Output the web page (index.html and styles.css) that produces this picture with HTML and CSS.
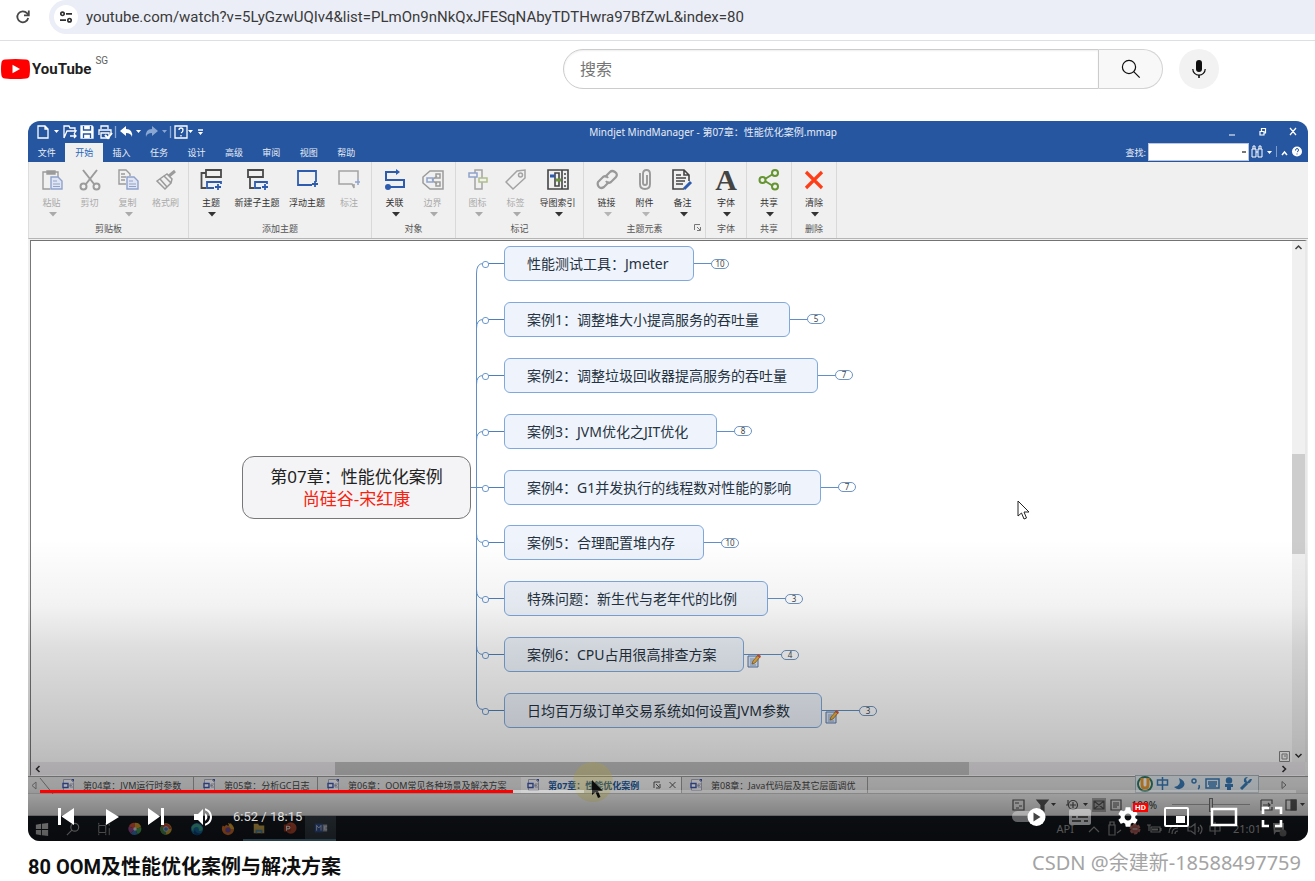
FILE: index.html
```html
<!DOCTYPE html>
<html lang="zh-CN">
<head>
<meta charset="utf-8">
<title>80 OOM及性能优化案例与解决方案 - YouTube</title>
<link rel="stylesheet" href="styles.css">
</head>
<body>
<svg class="defs" width="0" height="0" aria-hidden="true">
  <symbol id="doc" viewBox="0 0 13 12"><path d="M1.500 .5h7l3 3v8h-10z" fill="#f4f4fa" stroke="#a3a6b8"/><path d="M9 0h3v3z" fill="#3f57ab"/><path d="M1 4.500h5v4H1z" fill="#fff" stroke="#3c55ad" stroke-width="1.400"/><path d="M6 6.500h1.500M11 5H8v3h3M8 6.500h2" fill="none" stroke="#8d92a6" stroke-width=".8"/></symbol>
  <symbol id="note" viewBox="0 0 14 14"><path d="M1 2h10v11H1z" fill="#dbe7f7" stroke="#5b78a8"/><path d="M3 5h4M3 7h3M3 9h3M3 11h6" stroke="#8ba0c2"/><path d="M5 10l1-3 5-6 2 2-5 6z" fill="#eeb13c" stroke="#7d5a22" stroke-width=".7"/><path d="M11 0l3 2-1 2-3-2z" fill="#d4523d"/></symbol>
  <symbol id="down" viewBox="0 0 8 5"><path d="M0 0h8L4 4.500z" fill="currentColor"/></symbol>
</svg>

<header class="browser">
  <button class="reload" aria-label="重新加载"><svg width="16" height="16" viewBox="0 0 16 16" fill="none" stroke="#474747" stroke-width="1.800"><path d="M13.200 9A5.500 5.500 0 1 1 12 4.200l1.500 1.600"/><path d="M13.800 1.500v4.800H9"/></svg></button>
  <div class="omnibox">
    <button class="site" aria-label="网站信息"><svg width="14" height="12" viewBox="0 0 14 12" fill="none" stroke="#303030" stroke-width="1.700"><circle cx="3.500" cy="2.800" r="1.700"/><path d="M7 2.800h6M1 9.200h6"/><circle cx="10.500" cy="9.200" r="1.700"/></svg></button>
    <input class="url" type="text" aria-label="地址" value="youtube.com/watch?v=5LyGzwUQIv4&amp;list=PLmOn9nNkQxJFESqNAbyTDTHwra97BfZwL&amp;index=80">
  </div>
</header>

<div class="masthead">
  <a class="logo" href="#" aria-label="YouTube SG">
    <svg width="29" height="20" viewBox="0 0 29 20"><path d="M4 .5Q14.500-.5 25 .5q3.300.3 3.600 3.500.8 6 0 12-.3 3.200-3.600 3.500-10.500 1-21 0Q.7 19.200.4 16-.4 10 .4 4 .7.800 4 .5z" fill="red"/><path d="M11.500 5.800v8.400l7.500-4.200z" fill="#fff"/></svg>
    <span class="wordmark">YouTube</span><span class="country">SG</span>
  </a>
  <form class="search">
    <input type="text" placeholder="搜索" aria-label="搜索">
    <button type="button" class="go" aria-label="执行搜索"><svg width="20" height="20" viewBox="0 0 20 20" fill="none" stroke="#0f0f0f" stroke-width="1.200"><circle cx="8" cy="8" r="6.600"/><path d="M12.700 12.700l6 6"/></svg></button>
    <button type="button" class="mic" aria-label="语音搜索"><svg width="24" height="24" viewBox="0 0 24 24"><path d="M12 3a3 3 0 0 1 3 3v6a3 3 0 0 1-6 0V6a3 3 0 0 1 3-3z" fill="#0f0f0f"/><path d="M5.800 12a6.200 6.200 0 0 0 12.400 0" fill="none" stroke="#0f0f0f" stroke-width="1.200"/><path d="M11.200 18h1.600v3h-1.600z" fill="#0f0f0f"/></svg></button>
  </form>
</div>

<main>
<section class="player" aria-label="视频播放器">
  <div class="title-row">
    <div class="quick">
      <svg width="168" height="18" viewBox="0 0 168 18" fill="none" stroke="#fff" stroke-width="1.300"><path d="M2 3h7l3 3v9H2zM9 3v3h3"/><path d="M18 7h5l-2.500 3z" fill="#fff" stroke="none"/><path d="M28 15V3h5l1 2h5v3M28 15l3-7h9l-2 3M34 13h6m-2-2l2 2-2 2"/><path d="M45 3h11l1 1v11H45z" fill="#fff"/><path d="M47.500 3v4h7V3M47.500 15v-4h7v4" stroke="#26569f"/><path d="M65 6V3h7v3M63 12V7h12v5M65 10h8v5h-8zM66 7h5" /><path d="M69 12l3 3 4-5" stroke-width="2"/><path d="M79.500 3v12" stroke="#8ca9d3"/><path d="M84 8l6-5v3q7 0 6 8-1-4-6-4v3z" fill="#fff" stroke="none"/><path d="M100 7h5l-2.500 3z" fill="#fff" stroke="none"/><g fill="#89a7d2" stroke="none"><path d="M122 8l-6-5v3q-7 0-6 8 1-4 6-4v3z"/><path d="M126 7h5l-2.500 3z"/></g><path d="M134.500 3v12" stroke="#8ca9d3"/><path d="M139 3h12v12h-12zM143 7q0-2 2-2t2 2-2 3m0 2v1.500"/><path d="M152 7h5l-2.500 3zM162 9h5l-2.500 3z" fill="#fff" stroke="none"/><path d="M162 7h5"/></svg>
    </div>
    <div class="app-title">Mindjet MindManager - 第07章：性能优化案例.mmap</div>
    <div class="win">
      <svg width="70" height="12" viewBox="0 0 70 12" fill="none" stroke="#fff" stroke-width="1.200"><path d="M1 9h6M32 5.500h4V9h-4zM33.500 5V2.500h4V7H36M62 2l6 7M68 2l-6 7"/></svg>
    </div>
  </div>
  <nav class="menu">
    <div class="tabs"><button>文件</button><button class="on">开始</button><button>插入</button><button>任务</button><button>设计</button><button>高级</button><button>审阅</button><button>视图</button><button>帮助</button></div>
    <div class="find"><label for="find">查找:</label><select id="find"><option></option></select>
      <svg width="52" height="14" viewBox="0 0 52 14" fill="none" stroke="#fff"><path d="M1 12V4h4v8zM7 12V4h4v8zM5 7h2M2 4V1h2v3M8 4V1h2v3"/><path d="M16 6h5l-2.500 3z" fill="#fff" stroke="none"/><path d="M25.500 1v11" stroke="#7f9ccb"/><path d="M31 10l2.500-3 2.500 3" stroke-width="1.500"/><circle cx="46" cy="6.500" r="5" fill="#fff" stroke="none"/><path d="M44.500 5.500q0-2 1.500-2t1.500 1.500T46 7M46 8.500v1" stroke="#26569f"/></svg>
    </div>
  </nav>

  <div class="ribbon">
    <div class="group g1">
      <div class="tools">
        <button class="off"><svg viewBox="0 0 22 22" fill="none" stroke="#9b9b9b" stroke-width="1.400"><path d="M6 3H2v17h7M17 8V3h-3"/><path d="M6 2h8v3H6z" fill="#9b9b9b"/><path d="M10 8h7l4 4v8H10z" stroke="#8fa2cb" fill="#dfe5f3"/><path d="M12 12h4m-4 3h7m-7 2.500h7" stroke="#8fa2cb" stroke-width="1"/></svg>粘贴<i><svg><use href="#down"/></svg></i></button>
        <button class="off"><svg viewBox="0 0 22 22" fill="none" stroke="#9b9b9b" stroke-width="2"><path d="M4 1l11 14M18 1L7 15"/><circle cx="4.500" cy="17.500" r="3"/><circle cx="17.500" cy="17.500" r="3"/></svg>剪切<i></i></button>
        <button class="off"><svg viewBox="0 0 22 22" fill="none" stroke="#9b9b9b" stroke-width="1.400"><path d="M9 15H2V1h7l4 4v2M4 5h4M4 8h5M4 11h4"/><path d="M10 8h7l4 4v8H10z" stroke="#8fa2cb" fill="#dfe5f3"/><path d="M12 12h4m-4 3h7m-7 2.500h7" stroke="#8fa2cb" stroke-width="1"/></svg>复制<i><svg><use href="#down"/></svg></i></button>
        <button class="off"><svg viewBox="0 0 22 22" fill="none" stroke="#9b9b9b" stroke-width="1.500"><path d="M2 12l7-5 7 7-6 6zM9 7l3-2 5 5-1 4M5 10l7 8"/><path d="M14 7l6-5" stroke-width="3"/></svg>格式刷<i></i></button>
      </div><span class="cap">剪贴板</span>
    </div>
    <div class="group g2">
      <div class="tools">
        <button><svg viewBox="0 0 22 22" fill="none" stroke="#4a4a4a" stroke-width="1.800"><path d="M6 1h15v7H6zM6 4H1.500v15H6"/><path d="M14 19H7v-6h14v2M18 15v6m-3-3h6" stroke="#2d5cae"/></svg>主题<i><svg><use href="#down"/></svg></i></button>
        <button class="w54"><svg viewBox="0 0 22 22" fill="none" stroke="#4a4a4a" stroke-width="1.800"><path d="M2 1h15v7H2zM4 8v11h4"/><path d="M15 19H9v-6h12v2M19 15v6m-3-3h6" stroke="#2d5cae"/></svg>新建子主题<i></i></button>
        <button class="w46"><svg viewBox="0 0 22 22" fill="none" stroke="#2d5cae" stroke-width="1.800"><path d="M16 16H2V2h18v11M19 12v6m-3-3h6"/></svg>浮动主题<i></i></button>
        <button class="off"><svg viewBox="0 0 22 22" fill="none" stroke="#a3a3a3" stroke-width="1.500"><path d="M20 10V2H1v13h13l2 4v-4"/><path d="M20 10v6m-3-3h5" stroke="#8fa2cb"/></svg>标注<i></i></button>
      </div><span class="cap">添加主题</span>
    </div>
    <div class="group g3">
      <div class="tools">
        <button><svg viewBox="0 0 22 22" fill="none" stroke="#2d5cae" stroke-width="2"><path d="M14 3H2v8h18v7H5"/><path d="M12 0l4 3-4 3z" fill="#2d5cae" stroke="none"/><circle cx="4" cy="18" r="2" fill="#2d5cae"/></svg>关联<i><svg><use href="#down"/></svg></i></button>
        <button class="off"><svg viewBox="0 0 22 22" fill="none" stroke="#9b9b9b" stroke-width="1.500"><path d="M8 2h13v18H8l-7-6V8zM10 11l5-4m-5 4l5 4M14 5h4v4h-4zM14 13h4v4h-4z"/><path d="M5 9h6v4H5z" stroke="#8fa2cb"/></svg>边界<i><svg><use href="#down"/></svg></i></button>
      </div><span class="cap">对象</span>
    </div>
    <div class="group g4">
      <div class="tools">
        <button class="off"><svg viewBox="0 0 22 22" fill="#f0f0f0" stroke="#a3a3a3" stroke-width="1.500"><path d="M8 1h7v19H8z"/><path d="M2 4h8v4H2z" stroke="#8fa2cb"/><path d="M12 9h8v4h-8z" stroke="#aebf8a"/></svg>图标<i><svg><use href="#down"/></svg></i></button>
        <button class="off"><svg viewBox="0 0 22 22" fill="none" stroke="#a3a3a3" stroke-width="1.500"><path d="M1 13L12 2l8-1v8L8 20z"/><circle cx="15.500" cy="6" r="2"/></svg>标签<i><svg><use href="#down"/></svg></i></button>
        <button class="w46"><svg viewBox="0 0 22 22" fill="none" stroke="#444" stroke-width="1.600"><path d="M1 1h20v19H1zM15 1v19M8 4h4v13H8z"/><path d="M17 5h2m-2 4h2m-2 4h2m-2 4h2"/><path d="M3 7h5" stroke="#2d5cae" stroke-width="3"/><path d="M9 11h5" stroke="#69933d" stroke-width="3"/></svg>导图索引<i><svg><use href="#down"/></svg></i></button>
      </div><span class="cap">标记</span>
    </div>
    <div class="group g5">
      <div class="tools">
        <button class="half"><svg viewBox="0 0 22 22" fill="none" stroke="#999" stroke-width="2.200"><path d="M9 8l5-5q2-2 5 0t1 5l-5 5q-3 2-5-1"/><path d="M13 13l-5 5q-3 2-5 0t-1-5l5-5q3-2 5 1"/></svg>链接<i><svg><use href="#down"/></svg></i></button>
        <button class="half"><svg viewBox="0 0 22 22" fill="none" stroke="#999" stroke-width="1.900"><path d="M6 4v11q0 5 5 5t5-5V5q0-4-3.500-4T9 5v9q0 2 2 2t2-2V6"/></svg>附件<i><svg><use href="#down"/></svg></i></button>
        <button><svg viewBox="0 0 22 22" fill="none" stroke="#444" stroke-width="1.600"><path d="M17 12V6l-5-5H1v19h11M12 1v5h5M4 6h5M4 9h10M4 12h9M4 15h7"/><path d="M12 20l7-7" stroke="#2d5cae" stroke-width="3"/></svg>备注<i><svg><use href="#down"/></svg></i></button>
      </div><span class="cap">主题元素</span><svg class="launch" width="7" height="7" viewBox="0 0 7 7" fill="none" stroke="#777"><path d="M.5 6V.5H6M3 3l3 3M6.500 3v3.500H3"/></svg>
    </div>
    <div class="group g6"><div class="tools"><button><b class="letter">A</b>字体<i><svg><use href="#down"/></svg></i></button></div><span class="cap">字体</span></div>
    <div class="group g7"><div class="tools"><button><svg viewBox="0 0 22 22" fill="none" stroke="#659530" stroke-width="2"><path d="M7 10l8-5M7 12l8 5"/><circle cx="4.500" cy="11" r="3"/><circle cx="17" cy="4" r="3"/><circle cx="17" cy="17.500" r="3"/></svg>共享<i><svg><use href="#down"/></svg></i></button></div><span class="cap">共享</span></div>
    <div class="group g7"><div class="tools"><button><svg viewBox="0 0 22 22" fill="none" stroke="#ff3d17" stroke-width="3.200"><path d="M3 3l16 16M19 3L3 19"/></svg>清除<i><svg><use href="#down"/></svg></i></button></div><span class="cap">删除</span></div>
  </div>

  <div class="work">
    <div class="canvas">
      <svg class="wires" width="480" height="520" viewBox="0 0 480 520" fill="none" stroke="#5f8fc6">
        <path d="M440 247.500h14M445.500 33V461M452 23.500q-6.500 0-6.500 10M452 79.500q-6.500 0-6.500 9M452 135.500q-6.500 0-6.500 9M452 191.500q-6.500 0-6.500 9M452 302.500q-6.500 0-6.500-9M452 358.500q-6.500 0-6.500-9M452 414.500q-6.500 0-6.500-9M452 469.500q-6.500 0-6.500-10"/>
      </svg>
      <div class="root"><span>第07章：性能优化案例</span><span class="author">尚硅谷-宋红康</span></div>
      <ul class="branches">
        <li><s></s><span class="node n1">性能测试工具：Jmeter</span><em></em><b>10</b></li>
        <li><s></s><span class="node n2">案例1：调整堆大小提高服务的吞吐量</span><em></em><b>5</b></li>
        <li><s></s><span class="node n3">案例2：调整垃圾回收器提高服务的吞吐量</span><em></em><b>7</b></li>
        <li><s></s><span class="node n4">案例3：JVM优化之JIT优化</span><em></em><b>8</b></li>
        <li><s></s><span class="node n5">案例4：G1并发执行的线程数对性能的影响</span><em></em><b>7</b></li>
        <li><s></s><span class="node n6">案例5：合理配置堆内存</span><em></em><b>10</b></li>
        <li><s></s><span class="node n7">特殊问题：新生代与老年代的比例</span><em></em><b>3</b></li>
        <li><s></s><span class="node n8">案例6：CPU占用很高排查方案</span><em class="long"><svg width="14" height="14"><use href="#note"/></svg></em><b>4</b></li>
        <li><s></s><span class="node n9">日均百万级订单交易系统如何设置JVM参数</span><em class="long"><svg width="14" height="14"><use href="#note"/></svg></em><b>3</b></li>
      </ul>
      <svg class="pointer" width="13" height="20" viewBox="0 0 13 20"><path d="M1 1v15l3.500-3 2.500 6 2.500-1-2.500-6H12z" fill="#fff" stroke="#222"/></svg>
    </div>
    <div class="vscroll">
      <svg width="13" height="13" viewBox="0 0 13 13" fill="none" stroke="#444" stroke-width="1.500"><path d="M3.500 8l3-3 3 3"/></svg>
      <div class="vthumb"></div>
      <svg width="13" height="13" viewBox="0 0 13 13" fill="none" stroke="#333" stroke-width="1.500"><path d="M3.500 5l3 3 3-3"/></svg>
    </div>
    <svg class="fit" width="11" height="11" viewBox="0 0 11 11" fill="none" stroke="#888"><path d="M.5.5h10v10H.5zM3 3h5v5H3zM5 5h2"/></svg>
  </div>
  <div class="hscroll">
    <svg width="14" height="14" viewBox="0 0 14 14" fill="none" stroke="#333" stroke-width="1.600"><path d="M8.500 4l-3 3 3 3"/></svg>
    <div class="hthumb"></div>
    <svg width="14" height="14" viewBox="0 0 14 14" fill="none" stroke="#333" stroke-width="1.600"><path d="M5.500 4l3 3-3 3"/></svg>
  </div>
  <div class="docs">
    <svg class="back" width="26" height="17" viewBox="0 0 26 17" fill="none" stroke="#888"><path d="M8 5v7L4 8.500zM12 1l13 16"/></svg>
    <button class="d1"><svg width="13" height="12"><use href="#doc"/></svg>第04章：JVM运行时参数</button>
    <button class="d2"><svg width="13" height="12"><use href="#doc"/></svg>第05章：分析GC日志</button>
    <button class="d3"><svg width="13" height="12"><use href="#doc"/></svg>第06章：OOM常见各种场景及解决方案</button>
    <button class="d4"><svg width="13" height="12"><use href="#doc"/></svg>第07章：性能优化案例<svg class="x" width="24" height="8" viewBox="0 0 24 8" fill="none" stroke="#555"><path d="M1 7V1h6M3 3l3 3M7 3v4H3M16.500 1l6 6M22.500 1l-6 6"/></svg></button>
    <button class="d5"><svg width="13" height="12"><use href="#doc"/></svg>第08章：Java代码层及其它层面调优</button>
    <svg class="fwd" width="8" height="10" viewBox="0 0 8 10" fill="none" stroke="#777"><path d="M2 1.500v7L6 5z"/></svg>
  </div>
  <div class="status">
    <svg width="132" height="16" viewBox="0 0 132 16" fill="none" stroke="#555" stroke-width="1.200"><path d="M1 3h11v10H1zM3 6h4m0 3h3M4 11h3"/><path d="M25 3h11l-4 5v6l-3-2V8z" fill="#555"/><path d="M39 6h5l-2.500 3z" fill="#444" stroke="none"/><circle cx="61" cy="8" r="4.500"/><path d="M58 8h6m-3-3v6M56 3v5h-2"/><path d="M71 6h5l-2.500 3z" fill="#444" stroke="none"/><path d="M80 1h14v14H80z" fill="#aaa" stroke="none"/><path d="M82 4h10v8H82zM82 4l10 8m0-8l-10 8"/><path d="M99 3h10v10H99zM101 6h6m-6 2h6m-6 2h4"/></svg>
    <span class="pct">100%</span>
    <input class="zoom" type="range" aria-label="缩放" value="50">
    <svg width="48" height="16" viewBox="0 0 48 16" fill="none" stroke="#555" stroke-width="1.200"><path d="M3 3h11v4M3 3v10h11v-3M5 8h7m-2-2l2 2-2 2"/><path d="M28 3h10v10H28z"/><path d="M33 3h5v10h-5z" fill="#555"/><path d="M42 6h5l-2.500 3z" fill="#444" stroke="none"/></svg>
  </div>
  <div class="taskbar">
    <div class="apps">
      <span><svg viewBox="0 0 16 16" fill="#d5d5d5"><path d="M1 3l6-1v6H1zM8 2l7-1v7H8zM1 9h6v6l-6-1zM8 9h7v7l-7-1z"/></svg></span>
      <span><svg viewBox="0 0 16 16" fill="none" stroke="#bbb" stroke-width="1.300"><circle cx="10" cy="6" r="4.500"/><path d="M7 9l-6 6"/></svg></span>
      <span><svg viewBox="0 0 16 16" fill="none" stroke="#bbb"><path d="M2 4h8v8H2zM2 1v2m8-2v2M2 13v2m8-2v2M14 2v2m0 3v8"/></svg></span>
      <span><svg viewBox="0 0 16 16"><path d="M8 8L1 5a7 7 0 0 1 7-4z" fill="#ef5c3f"/><path d="M8 8V1a7 7 0 0 1 7 5z" fill="#f3b430"/><path d="M8 8l7-2a7 7 0 0 1-4 8z" fill="#55bb63"/><path d="M8 8l3 6a7 7 0 0 1-8-1z" fill="#3f8bd6"/><path d="M8 8l-5 5a7 7 0 0 1-2-8z" fill="#b654ae"/><circle cx="8" cy="8" r="2" fill="#fff"/></svg></span>
      <span><svg viewBox="0 0 16 16"><circle cx="8" cy="8" r="6.500" fill="#e9c13b"/><path d="M8 8H14A6.500 6.500 0 0 0 2.500 4.500z" fill="#d94c3e"/><path d="M8 8L2.500 4.500A6.500 6.500 0 0 0 8 14.500z" fill="#4e9b57"/><circle cx="8" cy="8" r="2.700" fill="#4984d8" stroke="#ddd"/></svg></span>
      <span><svg viewBox="0 0 16 16"><circle cx="8" cy="8" r="7" fill="#187ab8"/><path d="M2 5q6-7 12 1 2 5-4 4 1-5-4-4-3 1-2 5-3-2-2-6z" fill="#46bba1"/><path d="M6 8q-1 5 7 5-6 5-9-1z" fill="#0b4f8e"/></svg></span>
      <span><svg viewBox="0 0 16 16"><path d="M2 4l2 1 2-2q1 1 3 1l2-3q4 4 4 7a7 7 0 0 1-14 0q0-2 1-4z" fill="#ef7a2d"/><path d="M8 1q5 1 7 7h-4z" fill="#edbd38"/><circle cx="8" cy="9" r="3" fill="#7855b0"/></svg></span>
      <span class="run"><svg viewBox="0 0 16 16"><path d="M2 3h5l1 2h6v9H2z" fill="#dfb653"/><path d="M4 10h8v4h-2v-2H6v2H4z" fill="#4d9acb"/></svg></span>
      <span class="run"><svg viewBox="0 0 16 16"><circle cx="9" cy="8" r="6.500" fill="#c25034"/><path d="M1 4h8v8H1z" fill="#a83b23"/><path d="M4 11V6h2q2 0 2 1.500T6 9H4" fill="none" stroke="#fff" stroke-width="1.200"/></svg></span>
      <span class="run cur"><svg viewBox="0 0 16 16"><path d="M1 3h9v10H1z" fill="#365ba8"/><path d="M10 4h5v8h-5z" fill="#aab0bc"/><path d="M3 11V5l2.500 3L8 5v6M15 6h-3v4h3m-3-2h2" fill="none" stroke="#e9eef9"/></svg></span>
    </div>
    <div class="tray">
      <span>API</span>
      <svg width="136" height="16" viewBox="0 0 136 16" fill="none" stroke="#aaa" stroke-width="1.200"><path d="M2 11l5-5 5 5M22 4h6v10h-6zM23 4V1h4v3m3 8l4-3"/><circle cx="48" cy="8" r="4.500" fill="#b9625c" stroke="#cf7770" stroke-width="2" stroke-dasharray="3 1.700"/><path d="M45.500 8h5" stroke="#ddd"/><path d="M64 6h9v5h-9zM74 7v3M62 4v6m-2-6h4"/><path d="M65 7.500h6v2h-6z" fill="#aaa" stroke="none"/><path d="M82 12q0-8 9-8m-6 9q0-6 6-6m-3 6q0-3 3-3"/><path d="M101 6h3l4-3v10l-4-3h-3zM111 6q2 2 0 5m2-7q4 4 0 9"/><path d="M123 5h10v5h-10zM128 1v13"/></svg>
      <time>21:01</time>
      <svg width="16" height="16" viewBox="0 0 16 16"><path d="M2 2h11v9H5l-2 3z" fill="#aaa"/><path d="M4 5h7M4 8h7" stroke="#222"/><circle cx="12" cy="12" r="3.500" fill="#777"/></svg>
    </div>
  </div>
  <div class="ime">
    <svg width="122" height="16" viewBox="0 0 122 16" fill="none" stroke="#397bb8" stroke-width="1.500"><circle cx="9" cy="8" r="7" fill="#fff" stroke="#317963" stroke-width="2"/><path d="M6 2v7q0 3 3 3t3-3V2" stroke="#ef9f32" stroke-width="3"/><path d="M21.500 4h10v5h-10zM26.500 1v13"/><path d="M43 2q3 8-5 9 6 5 10-1 2-5-5-8z" fill="#397bb8" stroke="none"/><circle cx="58" cy="5" r="2"/><path d="M63 9q1 3-1 4"/><path d="M70 3h13v9H70zM72 6h9m-9 2h9m-8 2h7"/><circle cx="93" cy="4.500" r="2.500" fill="#397bb8"/><path d="M89 8h8v3h-2v3h-4v-3h-2z" fill="#397bb8" stroke="none"/><path d="M105 13l6-6" stroke-width="3"/><path d="M114 3l-3 3-1-3 2-2q-5 0-4 5 6 4 8-3z" fill="#397bb8" stroke="none"/></svg>
  </div>
  <div class="halo"></div>
  <svg class="pointer black" width="13" height="20" viewBox="0 0 13 20"><path d="M1 1v15l3.500-3 2.500 6 2.500-1-2.500-6H12z" fill="#111"/></svg>

  <div class="shade"></div>
  <div class="controls">
    <input class="progress" type="range" aria-label="播放进度" min="0" max="1095" value="412">
    <div class="bar">
      <button aria-label="上一个"><svg viewBox="0 0 36 36" fill="#fff"><path d="M10 9h3v17h-3zM13.500 17.500L26 26V9z"/></svg></button>
      <button aria-label="播放"><svg viewBox="0 0 36 36" fill="#fff"><path d="M12 10v16l13-8z"/></svg></button>
      <button aria-label="下一个"><svg viewBox="0 0 36 36" fill="#fff"><path d="M8 9v17l12-8.500zM21 9h3v17h-3z"/></svg></button>
      <button aria-label="静音"><svg viewBox="0 0 36 36" fill="#fff"><path d="M8 21h4l5 5V10l-5 5H8zM19 14v8a4.500 4.500 0 0 0 0-8zM19 11.290C21.890 12.150 24 14.830 24 18s-2.110 5.850-5 6.710v2.060c4-.91 7-4.490 7-8.770s-3-7.860-7-8.770z"/></svg></button>
      <span class="time">6:52 / 18:15</span>
      <div class="right">
        <button aria-label="自动播放"><svg viewBox="0 0 36 36"><rect x="-2" y="12" width="28" height="11" rx="5.500" fill="#fff" opacity=".35"/><circle cx="22.500" cy="18" r="9" fill="#fff"/><path d="M19.500 13.500v9l7-4.500z" fill="#444"/></svg></button>
        <button class="cc" aria-label="字幕"><svg viewBox="0 0 36 36" fill="none" stroke="#fff"><rect x="7" y="10" width="22" height="16" rx="2" fill="#fff" stroke="none" opacity=".45"/><path d="M10 18h4m2 0h10M10 22h9m3 0h4" stroke="#333" stroke-width="2"/></svg></button>
        <button class="gear" aria-label="设置"><svg viewBox="0 0 36 36" fill="#fff"><path d="m 23.94,18.78 c .03,-0.25 .05,-0.51 .05,-0.78 0,-0.27 -0.02,-0.52 -0.05,-0.78 l 1.68,-1.32 c .15,-0.12 .19,-0.33 .09,-0.51 l -1.6,-2.76 c -0.09,-0.17 -0.31,-0.24 -0.48,-0.17 l -1.99,.8 c -0.41,-0.32 -0.86,-0.58 -1.35,-0.78 l -0.30,-2.12 c -0.02,-0.19 -0.19,-0.33 -0.39,-0.33 l -3.2,0 c -0.2,0 -0.36,.14 -0.39,.33 l -0.30,2.12 c -0.48,.2 -0.93,.47 -1.35,.78 l -1.99,-0.8 c -0.18,-0.07 -0.39,0 -0.48,.17 l -1.6,2.76 c -0.10,.17 -0.05,.39 .09,.51 l 1.68,1.32 c -0.03,.25 -0.05,.52 -0.05,.78 0,.26 .02,.52 .05,.78 l -1.68,1.32 c -0.15,.12 -0.19,.33 -0.09,.51 l 1.6,2.76 c .09,.17 .31,.24 .48,.17 l 1.99,-0.8 c .41,.32 .86,.58 1.35,.78 l .30,2.12 c .02,.19 .19,.33 .39,.33 l 3.2,0 c .2,0 .36,-0.14 .39,-0.33 l .30,-2.12 c .48,-0.2 .93,-0.47 1.35,-0.78 l 1.99,.8 c .18,.07 .39,0 .48,-0.17 l 1.6,-2.76 c .09,-0.17 .05,-0.39 -0.09,-0.51 l -1.68,-1.32 z m -5.94,2.01 c -1.54,0 -2.8,-1.25 -2.8,-2.8 0,-1.54 1.25,-2.8 2.8,-2.8 1.54,0 2.8,1.25 2.8,2.8 0,1.54 -1.25,2.8 -2.8,2.8 z"/></svg><span class="hd">HD</span></button>
        <button aria-label="迷你播放器"><svg viewBox="0 0 36 36"><rect x="7" y="9" width="23" height="18" rx="1" fill="none" stroke="#fff" stroke-width="2"/><path d="M18 17h9v7h-9z" fill="#fff"/></svg></button>
        <button aria-label="影院模式"><svg viewBox="0 0 36 36"><path d="M6 10h24v16H6z" fill="none" stroke="#fff" stroke-width="2.500"/></svg></button>
        <button aria-label="全屏"><svg viewBox="0 0 36 36" fill="none" stroke="#fff" stroke-width="2.600"><path d="M9 15V9h6M21 9h6v6M27 21v6h-6M15 27H9v-6"/></svg></button>
      </div>
    </div>
  </div>
</section>
<h1>80 OOM及性能优化案例与解决方案</h1>
</main>
<div class="watermark">CSDN @余建新-18588497759</div>
</body>
</html>
```
FILE: styles.css
```css
* { box-sizing: border-box; }
body { margin: 0; position: relative; min-height: 100vh; overflow: hidden; background: #fff; color: #0f0f0f; font-family: Roboto, "Noto Sans CJK SC", sans-serif; }
button { border: 0; padding: 0; background: none; font: inherit; color: inherit; }
input { font: inherit; min-width: 0; }
svg { display: block; flex: none; }
.defs { position: absolute; }

.browser { display: flex; height: 41px; padding: 0 0 6px 15px; border-bottom: 1px solid #dedfe2; }
.reload { width: 34px; height: 34px; }
.omnibox { flex: 1; display: flex; align-items: center; height: 34px; padding-left: 5px; background: #ebeef7; border-radius: 17px 0 0 17px; }
.site { display: flex; align-items: center; justify-content: center; width: 24px; height: 24px; border-radius: 12px; background: #fff; }
.url { flex: 1; border: 0; padding: 0 0 0 8px; background: none; color: #3a3a3a; font-family: Roboto, sans-serif; font-size: 15px; line-height: 24px; }

.masthead { display: grid; grid-template-columns: 563fr 656fr 96fr; align-items: center; height: 56px; }
.logo { display: flex; align-items: center; padding-left: 1px; color: #212121; text-decoration: none; }
.wordmark { margin-left: 2px; font: bold 15px/24px Roboto, sans-serif; }
.country { align-self: flex-start; margin-left: 4px; font-size: 10px; line-height: 8px; color: #606060; }
.search { display: flex; height: 40px; }
.search input { flex: 1; border: 1px solid #ccc; border-radius: 20px 0 0 20px; padding: 0 16px; box-shadow: inset 0 1px 2px #eee; font-size: 16px; }
.search input::placeholder { color: #757575; }
.go { display: flex; align-items: center; justify-content: center; width: 64px; margin-right: 16px; border: 1px solid #d3d3d3; border-left: 0; border-radius: 0 20px 20px 0; background: #f8f8f8; }
.mic { display: flex; align-items: center; justify-content: center; width: 40px; border-radius: 20px; background: #f2f2f2; }

main { padding: 24px 7px 0 28px; }
h1 { margin: 12px 0 0; font-size: 20px; line-height: 28px; font-weight: 700; }
.player { position: relative; display: flex; flex-direction: column; aspect-ratio: 16 / 9; overflow: hidden; border-radius: 12px; background: #f0f0f0; font-family: "Noto Sans", "Noto Sans CJK SC", sans-serif; font-size: 9px; }

.title-row { display: grid; grid-template-columns: 6fr auto 5fr; align-items: center; height: 21px; padding: 0 10px 0 8px; background: #26569f; color: #e6edf8; }
.app-title { font-size: 10px; }
.win { display: flex; justify-content: flex-end; }
.menu { display: flex; height: 20px; padding-right: 5px; background: #26569f; color: #e6edf8; }
.tabs { display: flex; width: 337px; padding-top: 1px; }
.tabs button { flex: 1; line-height: 18px; }
.tabs .on { background: #f0f0f0; color: #2867bd; }
.find { display: flex; align-items: center; gap: 2px; margin-left: auto; }
.find select { width: 101px; height: 18px; border: 1px solid #b9c6dd; border-radius: 0; appearance: none; background: linear-gradient(#777, #777) 93px 7px / 4px 2px no-repeat #fff; }

.ribbon { display: flex; height: 77px; border-bottom: 1px solid #b5b5b5; border-left: 1px solid #ddd; }
.group { position: relative; display: flex; flex-direction: column; align-items: center; padding-top: 7px; border-right: 1px solid #d9d9d9; }
.g1 { width: 160px; } .g2 { width: 183px; } .g3 { width: 84px; } .g4 { width: 128px; } .g5 { width: 122px; } .g6 { width: 41px; } .g7 { width: 45px; }
.tools { display: flex; }
.tools button { display: flex; flex-direction: column; align-items: center; width: 38px; color: #333; line-height: 14px; white-space: nowrap; }
.tools .w54 { width: 54px; }
.tools .w46 { width: 46px; }
.tools svg { width: 22px; height: 22px; margin-bottom: 5px; }
.tools i { display: block; height: 8px; padding-top: 2px; margin-left: 2px; }
.tools i svg { width: 8px; height: 5px; margin: 0; }
.tools .off { color: #aaa; }
.tools .half i { color: #b5b5b5; }
.letter { height: 27px; font: bold 30px/22px "Liberation Serif", serif; color: #444; }
.cap { line-height: 12px; margin-top: 5px; color: #555; }
.launch { position: absolute; right: 4px; bottom: 7px; }

.work { position: relative; flex: 1; display: flex; margin: 1px 1px 0 2px; border-top: 1px solid #737373; border-left: 1px solid #777; border-right: 2px solid #e8e8e8; background: #fff; }
.canvas { position: relative; flex: 1; }
.wires { position: absolute; left: 0; top: -1px; }
.root { position: absolute; left: 211px; top: 215px; width: 229px; height: 63px; padding: 9px 0; border: 1px solid #777; border-radius: 12px; background: #f4f4f6; color: #222; font-size: 17px; line-height: 22px; text-align: center; }
.root span { display: block; }
.root .author { color: #f7230f; }
.branches { position: absolute; left: 451px; top: 5px; height: 482px; display: flex; flex-direction: column; justify-content: space-between; margin: 0; padding: 0; list-style: none; }
.branches li { display: flex; align-items: center; }
.branches s { width: 22px; height: 1px; background: #4f7fb8; position: relative; }
.branches s::before { content: ""; position: absolute; left: 0; top: -2px; width: 5px; height: 5px; border: 1px solid #6d9ad0; border-radius: 3px; background: #fff; }
.node { height: 35px; padding-left: 22px; border: 1px solid #7fa9dc; border-radius: 6px; background: #eff4fc; color: #253240; font-size: 14px; line-height: 33px; white-space: nowrap; }
.n1 { width: 190px; } .n2 { width: 286px; } .n3 { width: 314px; } .n4 { width: 213px; } .n5 { width: 317px; } .n6 { width: 200px; } .n7 { width: 264px; } .n8 { width: 240px; } .n9 { width: 318px; }
.branches em { position: relative; width: 17px; height: 1px; background: #5f8fc6; }
.branches em.long { width: 37px; }
.branches em svg { position: absolute; left: 3px; top: 0; }
.branches b { width: 18px; height: 10px; border: 1px solid #6d94c2; border-radius: 5px; background: #fff; color: #444; font-size: 8px; font-weight: 400; line-height: 8px; text-align: center; }
.pointer { position: absolute; left: 986px; top: 259px; }
.pointer.black { left: 563px; top: 658px; }
.vscroll { display: flex; flex-direction: column; width: 13px; background: #f0f0f0; }
.vthumb { height: 100px; margin: 200px 0 auto; background: #cdcdcd; }
.fit { position: absolute; right: 15px; bottom: 0; }
.hscroll { display: flex; height: 14px; margin: 0 3px 0 2px; padding-right: 14px; border-left: 1px solid #777; border-bottom: 1px solid #fff; background: #efebef; }
.hthumb { width: 634px; margin: 0 auto 0 290px; background: #c3c3c3; }
.docs { display: flex; align-items: center; height: 18px; border-top: 1px solid #999; border-bottom: 1px solid #ccc; background: #e4e4e4; color: #444; }
.back { margin-right: -14px; }
.docs button { display: flex; align-items: center; gap: 8px; height: 16px; padding-left: 9px; border-right: 1px solid #999; white-space: nowrap; }
.docs .d1 { width: 154px; padding-left: 22px; } .docs .d2 { width: 124px; } .docs .d3 { width: 203px; border: 0; } .docs .d4 { width: 161px; padding-left: 6px; background: #f6f6f6; color: #205a9f; font-weight: 700; } .docs .d5 { width: 186px; padding-left: 8px; }
.x { margin-left: auto; margin-right: 4px; }
.fwd { margin-left: auto; margin-right: 20px; }
.status { display: flex; align-items: center; justify-content: flex-end; height: 22px; padding-right: 2px; border-bottom: 1px solid #bbb; }
.pct { font-size: 10px; color: #333; margin-left: -12px; }
.zoom { width: 78px; height: 16px; margin: 0 8px 0 15px; appearance: none; background: linear-gradient(#aaa, #aaa) 0 50% / 100% 1px no-repeat; }
.zoom::-webkit-slider-thumb { appearance: none; width: 4px; height: 14px; border: 1px solid #777; background: #ddd; }
.taskbar { display: flex; justify-content: space-between; height: 25px; background: #151a21; }
.apps { display: flex; margin-left: -2px; }
.apps span { display: flex; align-items: center; justify-content: center; width: 31px; height: 25px; }
.apps svg { width: 14px; height: 14px; }
.apps .run { border-bottom: 2px solid #5f95ad; }
.apps .cur { background: #37414b; }
.tray { display: flex; align-items: center; gap: 10px; margin-right: 21px; color: #bbb; font-size: 11px; }
.tray span { margin-right: 3px; }
.ime { position: absolute; right: 49px; bottom: 48px; height: 18px; border: 1px solid #a8b8c0; background: #e5edf2; }
.halo { position: absolute; left: 545px; top: 641px; width: 40px; height: 40px; border-radius: 20px; background: rgba(240, 220, 60, .28); }

.shade { position: absolute; inset: 58% 0 0; background: linear-gradient(transparent, rgba(0, 0, 0, .05) 22%, rgba(0, 0, 0, .13) 36%, rgba(0, 0, 0, .23) 66%, rgba(0, 0, 0, .3) 82%, rgba(0, 0, 0, .45) 91%, rgba(0, 0, 0, .6)); }
.controls { position: absolute; left: 12px; right: 12px; bottom: 0; height: 51px; color: #ddd; }
.progress { display: block; width: 100%; height: 3px; margin: 0; appearance: none; background: linear-gradient(90deg, #f00 473px, rgba(255, 255, 255, .5) 473px 544px, rgba(255, 255, 255, .2) 544px); }
.progress::-webkit-slider-thumb { appearance: none; width: 1px; height: 3px; background: #f00; }
.bar { display: flex; align-items: center; height: 48px; }
.bar button { position: relative; width: 46px; height: 36px; display: flex; justify-content: center; align-items: center; }
.bar button svg { width: 36px; height: 36px; overflow: visible; }
.bar > button:first-child { margin-left: 3px; }
.time { margin-left: 6px; font: 13px/20px Roboto, sans-serif; }
.right { display: flex; margin-left: auto; }
.right button { width: 48px; }
.bar .gear svg { width: 44px; height: 44px; }
.hd { position: absolute; left: 29px; top: 4px; padding: 0 2px; background: #f00; color: #fff; font: bold 8px/9px Roboto, sans-serif; }
.watermark { position: absolute; right: 14px; bottom: 6px; color: #a4a4a4; font-size: 20px; line-height: 24px; text-shadow: 1px 1px 0 #fff; white-space: nowrap; font-family: "Noto Sans", "Noto Sans CJK SC", sans-serif; }
```
